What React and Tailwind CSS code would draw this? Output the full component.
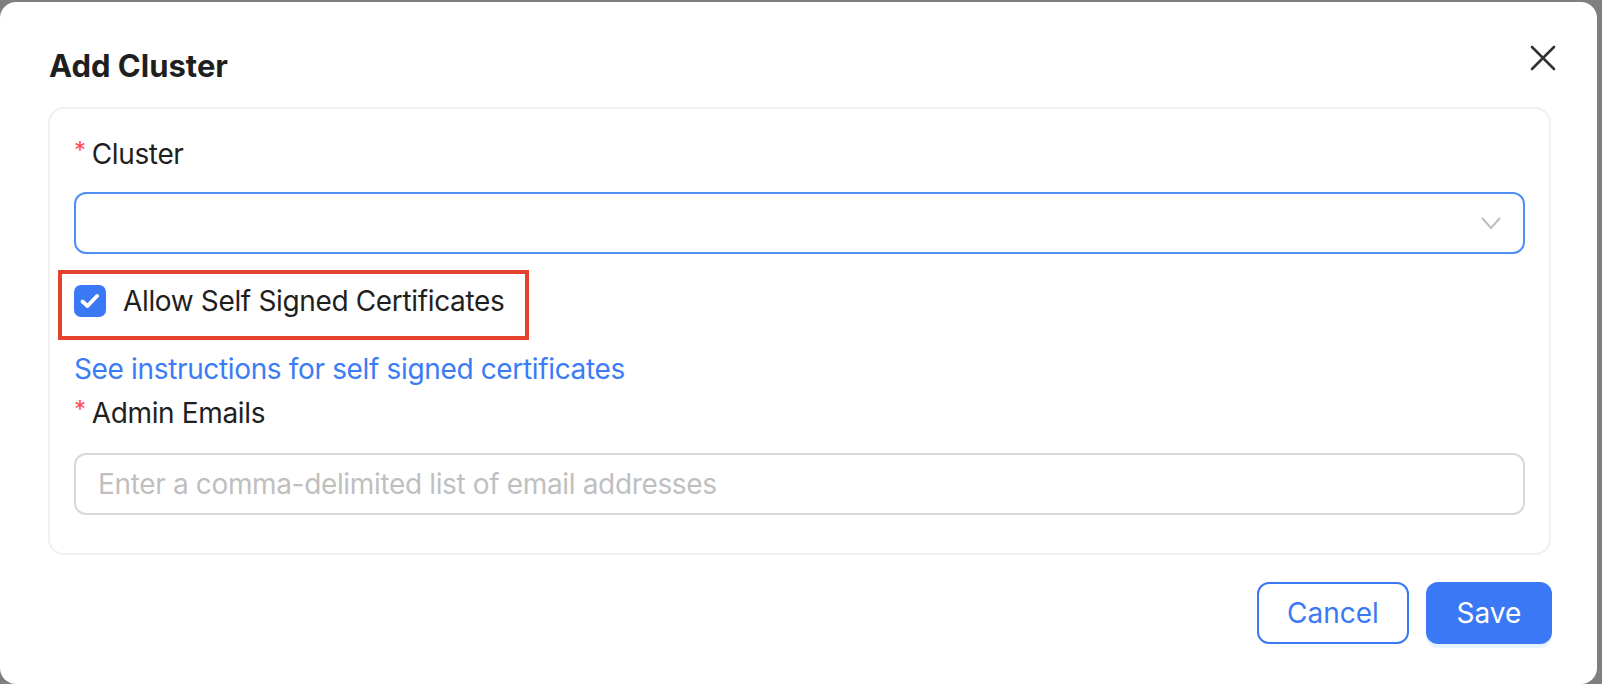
import { useState } from "react";

const font = { fontFamily: "Inter, 'Noto Sans', sans-serif" };

function RequiredLabel({ children, className = "" }) {
  return (
    <div className={`flex items-center h-[40px] text-[28px] leading-[40px] text-[#1f1f1f] ${className}`}>
      <span className="text-[#ff4d4f] text-[24px] mr-[6px] relative top-[-3px]">*</span>
      {children}
    </div>
  );
}

export default function App() {
  const [allowSelfSigned, setAllowSelfSigned] = useState(true);

  return (
    <div className="w-[1602px] h-[684px] bg-[#7f7f7f] pt-[2px] pr-[5px] overflow-hidden" style={font}>
      <div className="relative w-[1597px] h-[682px] bg-white rounded-[16px] pt-[44px] pl-[48px]">
        {/* Close */}
        <button className="absolute top-[43px] right-[41px] w-[26px] h-[26px] flex items-center justify-center text-[#2f3336]">
          <svg width="26" height="26" viewBox="0 0 26 26" fill="none">
            <path d="M2 2 L24 24 M24 2 L2 24" stroke="currentColor" strokeWidth="2.6" strokeLinecap="round" />
          </svg>
        </button>

        <h1 className="text-[31px] leading-[40px] font-bold text-[#1f1f1f] pl-[1px]">Add Cluster</h1>

        {/* Form card */}
        <div className="mt-[21px] w-[1503px] border-2 border-[#f0f0f0] rounded-[16px] pt-[25px] pb-[38px] px-[24px] tracking-[-0.35px]">
          <RequiredLabel>Cluster</RequiredLabel>

          <div className="mt-[18px] h-[62px] border-2 border-[#4f8ff5] rounded-[12px] flex items-center justify-end pr-[22px]">
            <svg width="20" height="14" viewBox="0 0 20 14" fill="none">
              <path d="M1 2 L10 12 L19 2" stroke="#bfbfbf" strokeWidth="2" />
            </svg>
          </div>

          <div className="mt-[16px] -ml-[16px] w-[471px] h-[70px] border-4 border-[#e5412d] pt-[7px] pl-[12px]">
            <label className="flex items-center h-[40px] cursor-pointer" onClick={() => setAllowSelfSigned(!allowSelfSigned)}>
              <span className={`w-[32px] h-[32px] rounded-[7px] flex items-center justify-center ${allowSelfSigned ? "bg-[#3b78f5]" : "bg-white border-2 border-[#d9d9d9]"}`}>
                {allowSelfSigned && (
                  <svg width="20" height="16" viewBox="0 0 20 16" fill="none">
                    <path d="M2.5 8.5 L7.5 13 L17 3" stroke="white" strokeWidth="3.8" strokeLinecap="round" strokeLinejoin="round" />
                  </svg>
                )}
              </span>
              <span className="ml-[17px] text-[28px] leading-[40px] text-[#1f1f1f]">Allow Self Signed Certificates</span>
            </label>
          </div>

          <a className="block mt-[9px] text-[28px] leading-[40px] text-[#3b7cf6] cursor-pointer">
            See instructions for self signed certificates
          </a>

          <RequiredLabel className="mt-[4px]">Admin Emails</RequiredLabel>

          <input
            className="mt-[20px] w-full h-[62px] border-2 border-[#d9d9d9] rounded-[12px] px-[22px] text-[28px] tracking-[-0.35px] text-[#1f1f1f] placeholder:text-[#bfbfbf] outline-none"
            placeholder="Enter a comma-delimited list of email addresses"
          />
        </div>

        {/* Footer */}
        <div className="mt-[27px] w-[1504px] flex justify-end gap-[17px]">
          <button className="w-[152px] h-[62px] border-2 border-[#3b78f5] rounded-[12px] text-[28px] text-[#3b78f5] bg-white">
            Cancel
          </button>
          <button className="w-[126px] h-[62px] rounded-[12px] text-[28px] text-white bg-[#3b78f5] shadow-[0_4px_0_rgba(5,145,255,0.1)]">
            Save
          </button>
        </div>
      </div>
    </div>
  );
}
